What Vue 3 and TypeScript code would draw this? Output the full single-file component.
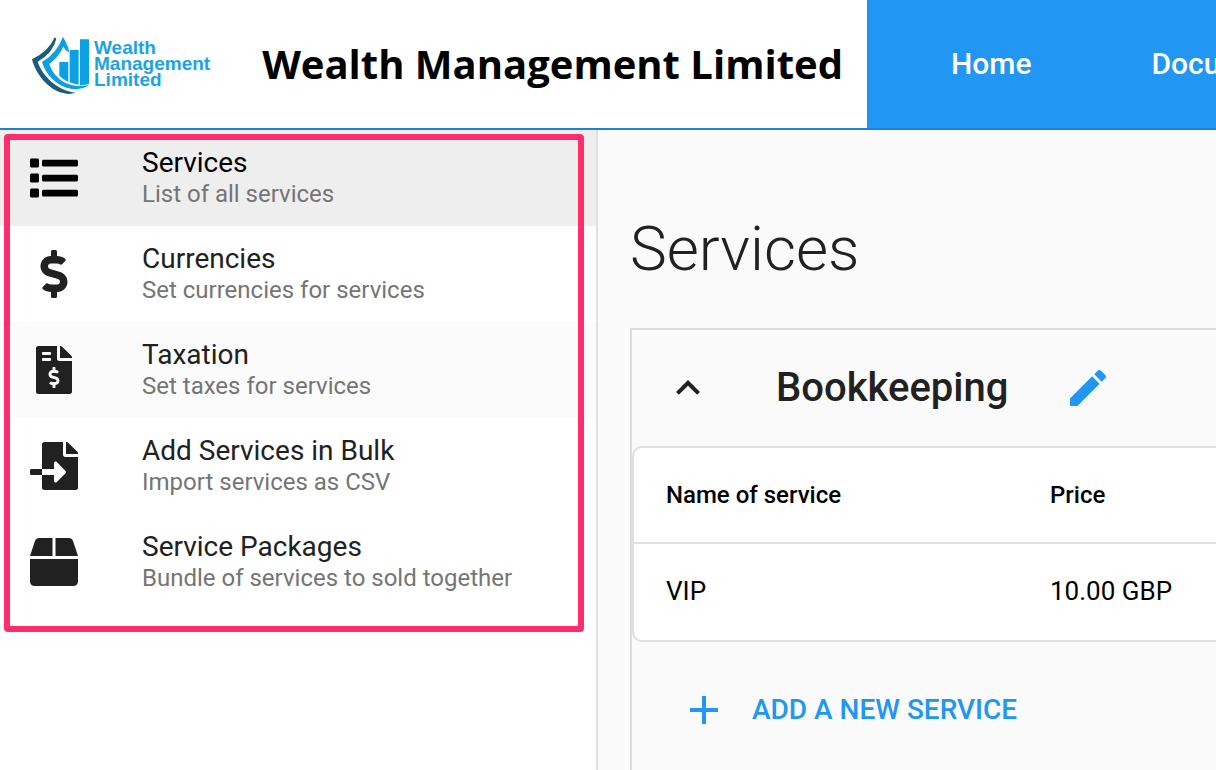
<script setup lang="ts">
interface MenuItem {
  title: string
  subtitle: string
  icon: string
  viewBox: string
  state?: 'active' | 'hover'
}

interface Service {
  name: string
  price: string
}

const menu: MenuItem[] = [
  {
    title: 'Services',
    subtitle: 'List of all services',
    viewBox: '0 0 512 512',
    state: 'active',
    icon: 'M128 116V76c0-8.8 7.2-16 16-16h352c8.8 0 16 7.2 16 16v40c0 8.8-7.2 16-16 16H144c-8.8 0-16-7.2-16-16zm0 160v-40c0-8.8 7.2-16 16-16h352c8.8 0 16 7.2 16 16v40c0 8.8-7.2 16-16 16H144c-8.8 0-16-7.2-16-16zm0 160v-40c0-8.8 7.2-16 16-16h352c8.8 0 16 7.2 16 16v40c0 8.8-7.2 16-16 16H144c-8.8 0-16-7.2-16-16zM16 144h64c8.8 0 16-7.2 16-16V64c0-8.8-7.2-16-16-16H16C7.2 48 0 55.2 0 64v64c0 8.8 7.2 16 16 16zm0 160h64c8.8 0 16-7.2 16-16v-64c0-8.8-7.2-16-16-16H16c-8.8 0-16 7.2-16 16v64c0 8.8 7.2 16 16 16zm0 160h64c8.8 0 16-7.2 16-16v-64c0-8.8-7.2-16-16-16H16c-8.8 0-16 7.2-16 16v64c0 8.8 7.2 16 16 16z',
  },
  {
    title: 'Currencies',
    subtitle: 'Set currencies for services',
    viewBox: '-112 0 512 512',
    icon: 'M209.2 233.4l-108-31.6C88.7 198.2 80 186.5 80 173.5c0-16.3 13.2-29.5 29.5-29.5h66.3c12.2 0 24.2 3.7 34.2 10.5 6.1 4.1 14.3 3.1 19.5-2l34.8-34c7.1-6.9 6.1-18.4-1.8-24.5C238 74.8 207.4 64.1 176 64V16c0-8.8-7.2-16-16-16h-32c-8.8 0-16 7.2-16 16v48h-2.5C45.8 64-5.4 118.7.5 183.6c4.2 46.1 39.4 83.6 83.8 96.6l102.5 30c12.5 3.7 21.2 15.3 21.2 28.3 0 16.3-13.2 29.5-29.5 29.5h-66.3C100 368 88 364.3 78 357.5c-6.1-4.1-14.3-3.1-19.5 2l-34.8 34c-7.1 6.9-6.1 18.4 1.8 24.5 24.5 19.2 55.1 29.9 86.5 30v48c0 8.8 7.2 16 16 16h32c8.8 0 16-7.2 16-16v-48.2c46.6-.9 90.3-28.6 105.7-72.7 21.5-61.6-14.6-124.8-72.5-141.7z',
  },
  {
    title: 'Taxation',
    subtitle: 'Set taxes for services',
    viewBox: '-64 0 512 512',
    state: 'hover',
    icon: 'M377 105L279.1 7c-4.5-4.5-10.6-7-17-7H256v128h128v-6.1c0-6.3-2.5-12.4-7-16.9zm-153 31V0H24C10.7 0 0 10.7 0 24v464c0 13.3 10.7 24 24 24h336c13.3 0 24-10.7 24-24V160H248c-13.2 0-24-10.8-24-24zM64 72c0-4.42 3.58-8 8-8h80c4.42 0 8 3.58 8 8v16c0 4.42-3.58 8-8 8H72c-4.42 0-8-3.58-8-8V72zm0 80v-16c0-4.42 3.58-8 8-8h80c4.42 0 8 3.58 8 8v16c0 4.42-3.58 8-8 8H72c-4.42 0-8-3.58-8-8zm144 263.88V440c0 4.42-3.58 8-8 8h-16c-4.42 0-8-3.58-8-8v-24.29c-11.29-.58-22.27-4.52-31.37-11.35-3.9-2.93-4.1-8.77-.57-12.14l11.75-11.21c2.77-2.64 6.89-2.76 10.13-.73 3.87 2.42 8.26 3.72 12.82 3.72h28.11c6.5 0 11.8-5.92 11.8-13.19 0-5.95-3.61-11.19-8.77-12.73l-45-13.5c-18.59-5.58-31.58-23.42-31.58-43.39 0-24.52 19.05-44.44 42.67-45.07V232c0-4.42 3.58-8 8-8h16c4.42 0 8 3.58 8 8v24.29c11.29.58 22.27 4.51 31.37 11.35 3.9 2.93 4.1 8.77.57 12.14l-11.75 11.21c-2.77 2.64-6.89 2.76-10.13.73-3.87-2.43-8.26-3.72-12.82-3.72h-28.11c-6.5 0-11.8 5.92-11.8 13.19 0 5.95 3.61 11.19 8.77 12.73l45 13.5c18.59 5.58 31.58 23.42 31.58 43.39 0 24.53-19.05 44.44-42.67 45.07z',
  },
  {
    title: 'Add Services in Bulk',
    subtitle: 'Import services as CSV',
    viewBox: '0 0 512 512',
    icon: 'M16 288c-8.8 0-16 7.2-16 16v32c0 8.8 7.2 16 16 16h112v-64zm489-183L407.1 7c-4.5-4.5-10.6-7-17-7H384v128h128v-6.1c0-6.3-2.5-12.4-7-16.9zm-153 31V0H152c-13.3 0-24 10.7-24 24v264h128v-65.2c0-14.3 17.3-21.4 27.4-11.3L379 308c6.6 6.7 6.6 17.4 0 24l-95.7 96.4c-10.1 10.1-27.4 3-27.4-11.3V352H128v136c0 13.3 10.7 24 24 24h336c13.3 0 24-10.7 24-24V160H376c-13.2 0-24-10.8-24-24z',
  },
  {
    title: 'Service Packages',
    subtitle: 'Bundle of services to sold together',
    viewBox: '0 0 512 512',
    icon: 'M509.5 184.6L458.9 32.8C452.4 13.2 434.1 0 413.4 0H272v192h238.7c-.4-2.5-.4-5-1.2-7.4zM240 0H98.6c-20.7 0-39 13.2-45.5 32.8L2.5 184.6c-.8 2.4-.8 4.9-1.2 7.4H240V0zM0 224v240c0 26.5 21.5 48 48 48h416c26.5 0 48-21.5 48-48V224H0z',
  },
]

const services: Service[] = [{ name: 'VIP', price: '10.00 GBP' }]
</script>

<template>
  <div class="page">
    <header class="topbar">
      <div class="brand">
        <a href="#" class="logo">
          <svg class="logo-mark" viewBox="30 28 180 180" aria-hidden="true">
            <path
              fill="#1d5b7d"
              d="M104 38Q86 80 36 104C46 146 88 206 148 208L168 204C114 198 68 156 53 111Q100 84 109 42Z"
            />
            <path
              fill="#0d9fe3"
              d="M129 36Q112 84 66 112C78 152 112 186 156 193C178 195 196 190 206 181C188 185 170 185 154 181C124 174 98 150 88 118Q118 94 130 66Q136 78 147 84C146 64 136 50 129 36Z"
            />
            <path
              fill="#0d9fe3"
              d="M118 112H145V172Q130 165 118 153ZM149 76H176V180Q162 178 149 173ZM180 44H207V178Q194 182 180 181Z"
            />
          </svg>
          <span class="logo-text">
            <span>Wealth</span>
            <span>Management</span>
            <span>Limited</span>
          </span>
        </a>
        <span class="company">Wealth Management Limited</span>
      </div>
      <nav class="topnav">
        <a href="#">Home</a>
        <a href="#">Documents</a>
      </nav>
    </header>

    <div class="body">
      <aside class="sidebar">
        <nav class="menu">
          <a v-for="item in menu" :key="item.title" href="#" class="menu-item" :class="item.state">
            <svg class="icon" :viewBox="item.viewBox" aria-hidden="true"><path :d="item.icon" /></svg>
            <span class="menu-text">
              <span class="menu-title">{{ item.title }}</span>
              <span class="menu-subtitle">{{ item.subtitle }}</span>
            </span>
          </a>
          <div class="highlight" aria-hidden="true"></div>
        </nav>
      </aside>

      <main class="content">
        <h1>Services</h1>
        <section class="panel">
          <div class="panel-head">
            <button type="button" aria-label="Collapse Bookkeeping">
              <svg class="icon" viewBox="0 0 24 24" aria-hidden="true">
                <path d="M7.41,15.41L12,10.83L16.59,15.41L18,14L12,8L6,14L7.41,15.41Z" />
              </svg>
            </button>
            <h2>Bookkeeping</h2>
            <button type="button" class="primary" aria-label="Edit Bookkeeping">
              <svg class="icon" viewBox="0 0 24 24" aria-hidden="true">
                <path
                  d="M20.71,7.04C21.1,6.65 21.1,6 20.71,5.63L18.37,3.29C18,2.9 17.35,2.9 16.96,3.29L15.12,5.12L18.87,8.87M3,17.25V21H6.75L17.81,9.93L14.06,6.18L3,17.25Z"
                />
              </svg>
            </button>
          </div>
          <div class="table-card">
            <table>
              <thead>
                <tr>
                  <th scope="col" class="name">Name of service</th>
                  <th scope="col">Price</th>
                </tr>
              </thead>
              <tbody>
                <tr v-for="service in services" :key="service.name">
                  <td>{{ service.name }}</td>
                  <td>{{ service.price }}</td>
                </tr>
              </tbody>
            </table>
          </div>
          <button type="button" class="add-button primary">
            <svg class="icon" viewBox="0 0 24 24" aria-hidden="true">
              <path d="M19,13H13V19H11V13H5V11H11V5H13V11H19V13Z" />
            </svg>
            ADD A NEW SERVICE
          </button>
        </section>
      </main>
    </div>
  </div>
</template>

<style>
body {
  margin: 0;
}
</style>

<style scoped>
.page {
  display: flex;
  flex-direction: column;
  min-height: 100vh;
  overflow: hidden;
  background: #fafafa;
  color: #212121;
  font-family: Roboto, 'Liberation Sans', sans-serif;
}

a {
  color: inherit;
  text-decoration: none;
}

button {
  border: 0;
  padding: 0;
  background: none;
  color: inherit;
  font-family: inherit;
  cursor: pointer;
}

.topbar {
  display: flex;
  height: 128px;
  border-bottom: 2px solid #1e82d2;
  background: #2196f3;
}

.brand {
  display: flex;
  flex: none;
  align-items: center;
  gap: 52px;
  padding: 0 24px 0 30px;
  background: #fff;
}

.logo {
  display: flex;
  align-items: center;
  gap: 4px;
}

.logo-mark {
  width: 60px;
  height: 60px;
}

.logo-text {
  display: flex;
  flex-direction: column;
  color: #1ba4e4;
  font-family: 'Liberation Sans', sans-serif;
  font-size: 19px;
  font-weight: 700;
  line-height: 16px;
}

.company {
  color: #000;
  font-family: 'Open Sans', sans-serif;
  font-size: 40px;
  font-weight: 700;
  line-height: 54px;
  white-space: nowrap;
}

.topnav {
  display: flex;
  flex: 1;
  min-width: 0;
  padding-left: 24px;
  overflow: hidden;
}

.topnav a {
  display: flex;
  flex: none;
  align-items: center;
  padding: 0 60px;
  color: #fff;
  font-size: 30px;
  font-weight: 500;
  line-height: 34px;
}

.body {
  display: flex;
  flex: 1;
}

.sidebar {
  flex: none;
  width: 596px;
  border-right: 2px solid #e0e0e0;
  background: #fff;
}

.menu {
  position: relative;
}

.menu-item {
  display: flex;
  align-items: center;
  gap: 64px;
  height: 96px;
  padding: 0 30px;
}

.menu-item.active {
  background: #eee;
  color: #000;
}

.menu-item.hover {
  background: #fbfbfb;
}

.menu-text {
  display: flex;
  flex-direction: column;
}

.menu-title {
  font-size: 28px;
  line-height: 32px;
}

.menu-subtitle {
  color: #757575;
  font-size: 24px;
  line-height: 30px;
}

.highlight {
  position: absolute;
  top: 4px;
  right: 12px;
  bottom: -22px;
  left: 4px;
  border: 6px solid #ff2d6c;
  border-radius: 4px;
  pointer-events: none;
}

.content {
  display: flex;
  flex: 1;
  flex-direction: column;
  min-width: 0;
  padding: 80px 0 0 32px;
}

h1 {
  margin: 0 0 40px;
  font-size: 62px;
  font-weight: 300;
  line-height: 78px;
}

.panel {
  flex: 1;
  border: 2px solid #dcdcdc;
  border-right: 0;
  border-bottom: 0;
}

.panel-head {
  display: flex;
  align-items: center;
  height: 116px;
  padding-left: 32px;
}

h2 {
  margin: 0 56px 0 64px;
  font-size: 40px;
  font-weight: 500;
  line-height: 46px;
}

.icon {
  display: block;
  flex: none;
  width: 48px;
  height: 48px;
  fill: currentColor;
}

.primary {
  color: #2196f3;
}

.table-card {
  border: 2px solid #e0e0e0;
  border-right: 0;
  border-radius: 10px 0 0 10px;
  background: #fff;
  color: #000;
}

table {
  width: 100%;
  border-collapse: separate;
  border-spacing: 0;
  table-layout: fixed;
}

th,
td {
  box-sizing: border-box;
  height: 96px;
  padding: 0 0 0 32px;
  text-align: left;
  white-space: nowrap;
}

th {
  border-bottom: 2px solid #e0e0e0;
  font-size: 24px;
  font-weight: 500;
}

.name {
  width: 384px;
}

td {
  padding-bottom: 2px;
  font-size: 26px;
}

.add-button {
  display: flex;
  align-items: center;
  gap: 24px;
  height: 136px;
  padding-left: 48px;
  font-size: 28px;
  font-weight: 500;
  line-height: 32px;
}
</style>
